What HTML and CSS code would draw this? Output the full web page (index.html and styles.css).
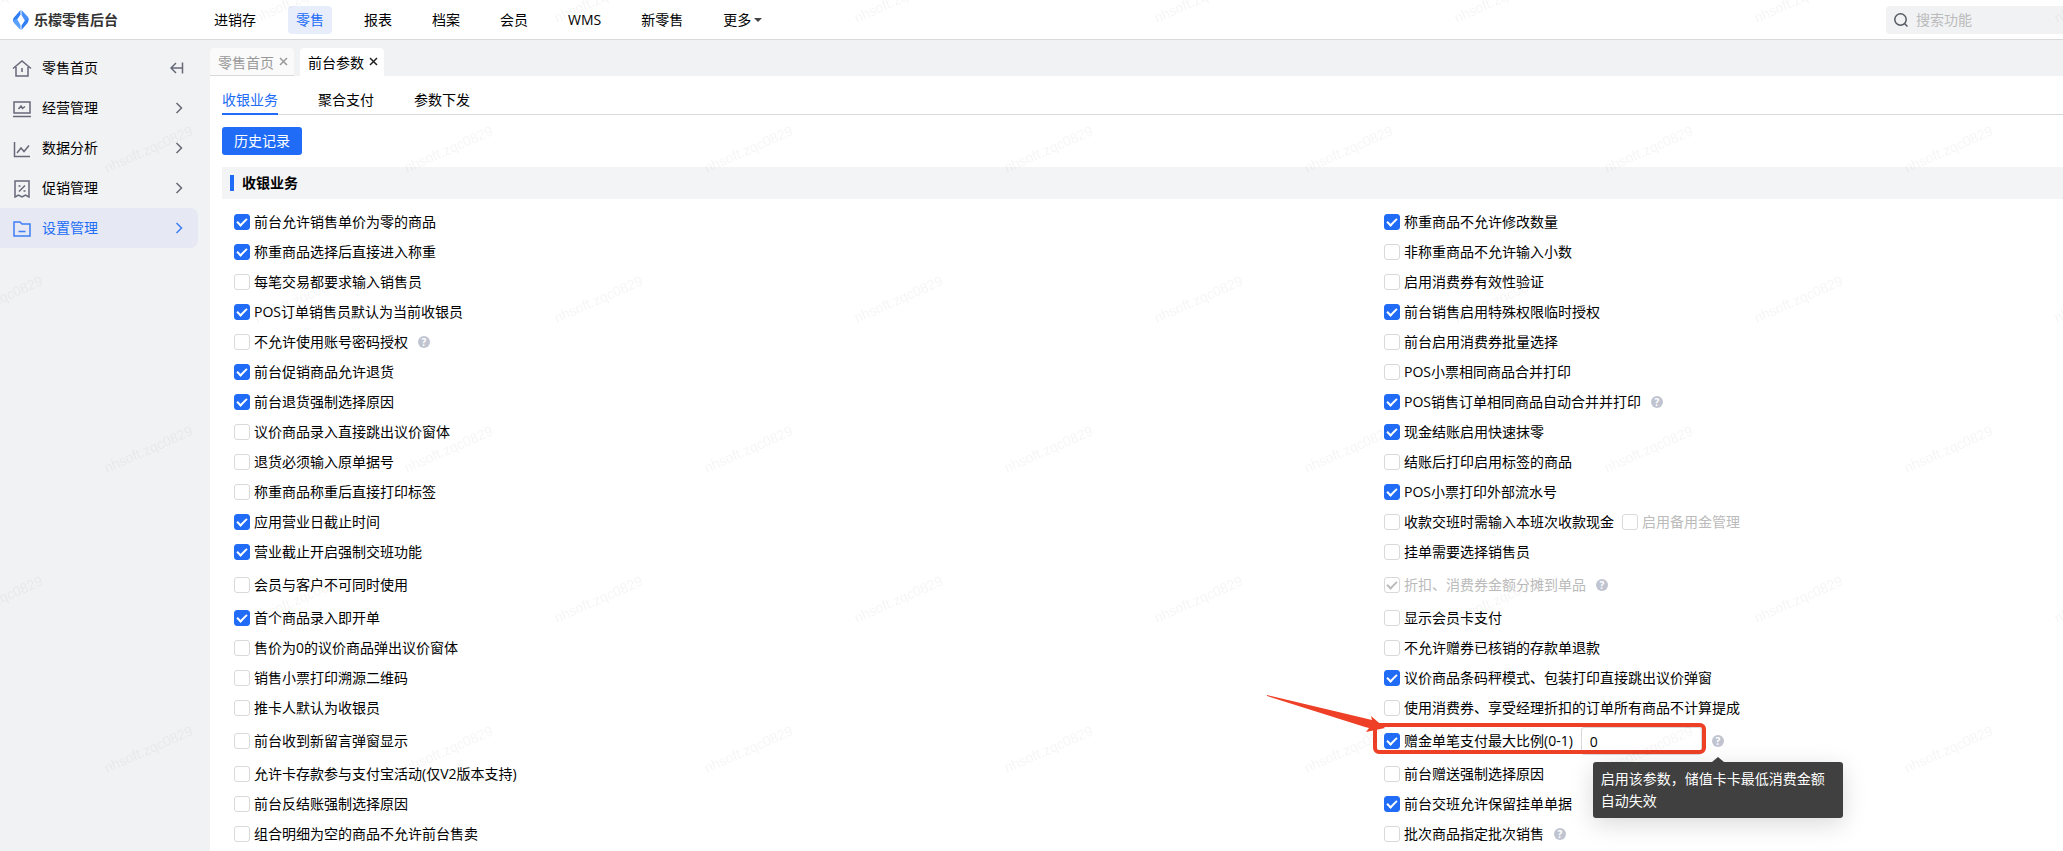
FILE: index.html
```
<!DOCTYPE html>
<html lang="zh-CN">
<head>
  <meta charset="UTF-8" />
  <title>乐檬零售后台</title>
  <link rel="stylesheet" href="styles.css">
</head>
<body>
  <header class="header">
    <div class="brand">
      <svg width="16" height="20" viewBox="0 0 16 20">
        <path d="M7.5 0 L7.5 4.500 L4.500 9 L1 12.500 Q0 11 0 10 Q0 9 0.600 8 Z" fill="#2f7df6"/>
        <path d="M8.500 0 L15 7 Q16 8.600 15.500 10 L12 11 L8.500 5 Z" fill="#4a90fa"/>
        <path d="M0.600 10 L4 9 L7.500 15 L7.500 20 L1 13 Q0 11.500 0.600 10 Z" fill="#58a0ff"/>
        <path d="M15.400 8.500 Q16 11.500 14.500 13 L8.500 20 L8.500 15.500 L11.500 11 Z" fill="#2f7df6"/>
      </svg>
      <span>乐檬零售后台</span>
    </div>
    <nav class="nav">
      <a href="#">进销存</a>
      <a href="#" class="active">零售</a>
      <a href="#">报表</a>
      <a href="#">档案</a>
      <a href="#">会员</a>
      <a href="#">WMS</a>
      <a href="#">新零售</a>
      <a href="#">更多<i class="caret"></i></a>
    </nav>
    <label class="search">
      <svg width="14" height="14" viewBox="0 0 14 14" fill="none" stroke="#555a64" stroke-width="1.500">
        <circle cx="6.500" cy="6.500" r="5.700"/><path d="M10.500 10.500 L13.500 13.500"/>
      </svg>
      <input type="text" placeholder="搜索功能" aria-label="搜索功能" />
    </label>
  </header>

  <div class="layout">
    <aside class="sidebar">
      <a href="#" class="menu">
        <svg class="icon" viewBox="0 0 20 20"><path d="M1 10.500 L10 3 L19 10.500 M4 9 V18 H16 V9 M10 10 V14"/></svg>
        <span>零售首页</span>
        <svg class="fold" viewBox="0 0 14 12"><path d="M6 1 L1 6 L6 11 M1 6 H12 M12.500 0.500 V11.500"/></svg>
      </a>
      <a href="#" class="menu">
        <svg class="icon" viewBox="0 0 20 20"><path d="M2 4 H18 V15 H2 Z M1 18.500 H19 M6.500 11 L9 8 L10.500 10.500 L13 8.500"/></svg>
        <span>经营管理</span>
        <svg class="arrow" viewBox="0 0 8 12"><path d="M1.500 1 L6.500 6 L1.500 11"/></svg>
      </a>
      <a href="#" class="menu">
        <svg class="icon" viewBox="0 0 20 20"><path d="M2.500 4 V18.500 H18 M5 15 L9 10 L12 13.500 L17 7.500"/></svg>
        <span>数据分析</span>
        <svg class="arrow" viewBox="0 0 8 12"><path d="M1.500 1 L6.500 6 L1.500 11"/></svg>
      </a>
      <a href="#" class="menu">
        <svg class="icon" viewBox="0 0 20 20"><path d="M3 3 H17 V19 L13.500 17 L10 19 L6.500 17 L3 19 Z M7 13.500 L13 7.500 M6.500 8 H8.500 M11.500 13 H13.500"/></svg>
        <span>促销管理</span>
        <svg class="arrow" viewBox="0 0 8 12"><path d="M1.500 1 L6.500 6 L1.500 11"/></svg>
      </a>
      <a href="#" class="menu active">
        <svg class="icon" viewBox="0 0 20 20"><path d="M2 18 V4 H8 L10 6 H18 V18 Z M6.500 13.500 H13.500"/></svg>
        <span>设置管理</span>
        <svg class="arrow" viewBox="0 0 8 12"><path d="M1.500 1 L6.500 6 L1.500 11"/></svg>
      </a>
    </aside>

    <main class="main">
      <div class="page-tabs">
        <div class="page-tab"><a href="#">零售首页</a><button type="button" aria-label="关闭"><svg viewBox="0 0 10 10"><path d="M1 1 L8 8 M8 1 L1 8"/></svg></button></div>
        <div class="page-tab active"><a href="#">前台参数</a><button type="button" aria-label="关闭"><svg viewBox="0 0 10 10"><path d="M1 1 L8 8 M8 1 L1 8"/></svg></button></div>
      </div>

      <div class="panel">
        <nav class="sub-tabs">
          <a href="#" class="active">收银业务</a>
          <a href="#">聚合支付</a>
          <a href="#">参数下发</a>
        </nav>
        <button type="button" class="btn">历史记录</button>
        <h2 class="title">收银业务</h2>

        <div class="params">
          <div class="row"><label><input type="checkbox" checked />前台允许销售单价为零的商品</label></div>
          <div class="row"><label><input type="checkbox" checked />称重商品不允许修改数量</label></div>

          <div class="row"><label><input type="checkbox" checked />称重商品选择后直接进入称重</label></div>
          <div class="row"><label><input type="checkbox" />非称重商品不允许输入小数</label></div>

          <div class="row"><label><input type="checkbox" />每笔交易都要求输入销售员</label></div>
          <div class="row"><label><input type="checkbox" />启用消费券有效性验证</label></div>

          <div class="row"><label><input type="checkbox" checked />POS订单销售员默认为当前收银员</label></div>
          <div class="row"><label><input type="checkbox" checked />前台销售启用特殊权限临时授权</label></div>

          <div class="row"><label><input type="checkbox" />不允许使用账号密码授权</label><span class="help">?</span></div>
          <div class="row"><label><input type="checkbox" />前台启用消费券批量选择</label></div>

          <div class="row"><label><input type="checkbox" checked />前台促销商品允许退货</label></div>
          <div class="row"><label><input type="checkbox" />POS小票相同商品合并打印</label></div>

          <div class="row"><label><input type="checkbox" checked />前台退货强制选择原因</label></div>
          <div class="row"><label><input type="checkbox" checked />POS销售订单相同商品自动合并并打印</label><span class="help">?</span></div>

          <div class="row"><label><input type="checkbox" />议价商品录入直接跳出议价窗体</label></div>
          <div class="row"><label><input type="checkbox" checked />现金结账启用快速抹零</label></div>

          <div class="row"><label><input type="checkbox" />退货必须输入原单据号</label></div>
          <div class="row"><label><input type="checkbox" />结账后打印启用标签的商品</label></div>

          <div class="row"><label><input type="checkbox" />称重商品称重后直接打印标签</label></div>
          <div class="row"><label><input type="checkbox" checked />POS小票打印外部流水号</label></div>

          <div class="row"><label><input type="checkbox" checked />应用营业日截止时间</label></div>
          <div class="row">
            <label><input type="checkbox" />收款交班时需输入本班次收款现金</label>
            <label class="disabled"><input type="checkbox" disabled />启用备用金管理</label>
          </div>

          <div class="row"><label><input type="checkbox" checked />营业截止开启强制交班功能</label></div>
          <div class="row"><label><input type="checkbox" />挂单需要选择销售员</label></div>

          <div class="row tall"><label><input type="checkbox" />会员与客户不可同时使用</label></div>
          <div class="row tall"><label class="disabled"><input type="checkbox" checked disabled />折扣、消费券金额分摊到单品</label><span class="help">?</span></div>

          <div class="row"><label><input type="checkbox" checked />首个商品录入即开单</label></div>
          <div class="row"><label><input type="checkbox" />显示会员卡支付</label></div>

          <div class="row"><label><input type="checkbox" />售价为0的议价商品弹出议价窗体</label></div>
          <div class="row"><label><input type="checkbox" />不允许赠券已核销的存款单退款</label></div>

          <div class="row"><label><input type="checkbox" />销售小票打印溯源二维码</label></div>
          <div class="row"><label><input type="checkbox" checked />议价商品条码秤模式、包装打印直接跳出议价弹窗</label></div>

          <div class="row"><label><input type="checkbox" />推卡人默认为收银员</label></div>
          <div class="row"><label><input type="checkbox" />使用消费券、享受经理折扣的订单所有商品不计算提成</label></div>

          <div class="row tall"><label><input type="checkbox" />前台收到新留言弹窗显示</label></div>
          <div class="row tall">
            <div class="marked">
              <label><input type="checkbox" checked />赠金单笔支付最大比例(0-1)</label>
              <input type="text" class="ratio" value="0" aria-label="赠金单笔支付最大比例" />
              <svg class="pointer" width="118" height="38" viewBox="0 0 118 38">
                <path d="M0 0 L105 25 L104 21 L118 33 L99 37 L102 33 L98 32 L0 1 Z" fill="#ee4026"/>
              </svg>
            </div>
            <span class="help">?
              <span class="tooltip">启用该参数，储值卡卡最低消费金额自动失效</span>
            </span>
          </div>

          <div class="row"><label><input type="checkbox" />允许卡存款参与支付宝活动(仅V2版本支持)</label></div>
          <div class="row"><label><input type="checkbox" />前台赠送强制选择原因</label></div>

          <div class="row"><label><input type="checkbox" />前台反结账强制选择原因</label></div>
          <div class="row"><label><input type="checkbox" checked />前台交班允许保留挂单单据</label></div>

          <div class="row"><label><input type="checkbox" />组合明细为空的商品不允许前台售卖</label></div>
          <div class="row"><label><input type="checkbox" />批次商品指定批次销售</label><span class="help">?</span></div>
        </div>
      </div>
    </main>
  </div>

  <svg class="watermark" aria-hidden="true">
    <defs>
      <pattern id="wm" width="300" height="300" patternUnits="userSpaceOnUse">
        <text transform="translate(107 173) rotate(-24)">nhsoft.zqc0829</text>
        <text transform="translate(257 23) rotate(-24)">nhsoft.zqc0829</text>
        <text transform="translate(257 323) rotate(-24)">nhsoft.zqc0829</text>
        <text transform="translate(-43 23) rotate(-24)">nhsoft.zqc0829</text>
        <text transform="translate(-43 323) rotate(-24)">nhsoft.zqc0829</text>
      </pattern>
    </defs>
    <rect width="100%" height="100%" fill="url(#wm)"/>
  </svg>
</body>
</html>
```

FILE: styles.css
```
*, *::before, *::after {
  box-sizing: border-box;
}
body {
  margin: 0;
  height: 100vh;
  display: flex;
  flex-direction: column;
  overflow: hidden;
  font-family: "Open Sans", "Noto Sans CJK SC", sans-serif;
  font-size: 14px;
  line-height: 20px;
  color: #000;
  background: #f1f2f4;
}
a {
  color: inherit;
  text-decoration: none;
}
input, button {
  font: inherit;
}

/* Header */
.header {
  display: flex;
  align-items: center;
  flex: none;
  height: 40px;
  background: #fff;
  border-bottom: 1px solid #d9d9d9;
}
.brand {
  display: flex;
  align-items: center;
  gap: 5px;
  width: 206px;
  padding-left: 13px;
  font-weight: 700;
  color: #333;
}
.nav {
  display: flex;
  gap: 24px;
}
.nav a {
  padding: 4px 8px;
  border-radius: 4px;
}
.nav a.active {
  color: #206cf6;
  background: #e8edfb;
}
.caret {
  display: inline-block;
  margin-left: 3px;
  vertical-align: 3px;
  border: 4px solid transparent;
  border-top-color: #444;
  border-bottom: 0;
}
.search {
  display: flex;
  align-items: center;
  gap: 8px;
  width: 177px;
  height: 28px;
  margin-left: auto;
  padding-left: 8px;
  border-radius: 4px 0 0 4px;
  background: #f1f2f4;
}
.search input {
  width: 140px;
  padding: 0;
  border: 0;
  background: none;
  outline: none;
}
.search input::placeholder {
  color: #bbb;
}

.layout {
  display: flex;
  flex: 1;
  min-height: 0;
}

/* Sidebar */
.sidebar {
  flex: none;
  width: 210px;
  padding: 8px 12px 0 0;
}
.menu {
  display: flex;
  align-items: center;
  height: 40px;
  padding: 0 14px 0 12px;
  border-radius: 0 8px 8px 0;
}
.menu span {
  flex: 1;
  margin-left: 10px;
}
.menu svg {
  fill: none;
  stroke: #666a78;
  stroke-width: 1.5;
}
.icon {
  width: 20px;
  height: 20px;
}
.arrow {
  width: 8px;
  height: 12px;
  margin-right: 1px;
}
.fold {
  width: 14px;
  height: 12px;
}
.menu.active {
  color: #206cf6;
  background: #e6e9f3;
}
.menu.active svg {
  stroke: #3e7df5;
}

/* Opened pages */
.main {
  flex: 1;
  min-width: 0;
  padding-top: 8px;
}
.page-tabs {
  display: flex;
  gap: 6px;
}
.page-tab {
  display: flex;
  align-items: center;
  width: 84px;
  height: 28px;
  padding-left: 8px;
  gap: 5px;
  color: #999;
  background: #fafafa;
  border-bottom: 1px solid #d9d9d9;
  border-radius: 4px 4px 0 0;
}
.page-tab a {
  padding-top: 2px;
}
.page-tab button {
  display: flex;
  padding: 0;
  border: 0;
  background: none;
}
.page-tab svg {
  width: 10px;
  height: 10px;
  stroke: #999;
  stroke-width: 1.5;
}
.page-tab.active {
  color: #000;
  background: #fff;
  border-bottom-color: #fff;
}
.page-tab.active svg {
  stroke: #222;
}

.panel {
  padding-left: 12px;
  background: #fff;
  height: 100%;
}
.sub-tabs {
  display: flex;
  gap: 40px;
  height: 39px;
  border-bottom: 1px solid #d9d9d9;
}
.sub-tabs a {
  height: 39px;
  line-height: 48px;
}
.sub-tabs a.active {
  color: #206cf6;
  border-bottom: 2px solid #206cf6;
}
.btn {
  display: block;
  width: 80px;
  height: 28px;
  margin: 12px 0;
  padding: 0;
  border: 0;
  border-radius: 3px;
  color: #fff;
  background: #206cf6;
}
.title {
  display: flex;
  align-items: center;
  gap: 8px;
  height: 32px;
  margin: 0 0 8px;
  padding-left: 8px;
  font-size: 14px;
  background: #f3f4f6;
}
.title::before {
  content: "";
  width: 4px;
  height: 16px;
  background: #206cf6;
}

/* Parameter list, two columns */
.params {
  display: grid;
  grid-template-columns: 1150fr 679fr;
  padding-left: 12px;
}
.row {
  display: flex;
  align-items: center;
  gap: 8px;
  height: 30px;
  white-space: nowrap;
}
.row.tall {
  height: 36px;
}
.row label {
  display: flex;
  align-items: center;
  gap: 4px;
}
.row label.disabled {
  color: #bbb;
}
input[type="checkbox"] {
  appearance: none;
  position: relative;
  width: 16px;
  height: 16px;
  margin: 0;
  border: 1px solid #d9d9d9;
  border-radius: 3px;
  background: #fff;
}
input[type="checkbox"]:checked::after {
  content: "";
  position: absolute;
  left: 4px;
  top: 1px;
  width: 6px;
  height: 10px;
  border: solid #fff;
  border-width: 0 2px 2px 0;
  transform: rotate(45deg);
}
input[type="checkbox"]:checked {
  border-color: #206cf6;
  background: #206cf6;
}
input[type="checkbox"]:disabled {
  border-color: #d9d9d9;
  background: #fff;
}
input[type="checkbox"]:disabled::after {
  border-color: #bbb;
}
.help {
  position: relative;
  width: 12px;
  height: 12px;
  margin-left: 2px;
  border-radius: 50%;
  font-size: 10px;
  font-weight: 700;
  line-height: 12px;
  text-align: center;
  color: #fff;
  background: #c0c4d0;
}

/* Highlighted parameter */
.marked {
  position: relative;
  display: flex;
  align-items: center;
  gap: 8px;
}
.marked::after {
  content: "";
  position: absolute;
  inset: -4px -4px 1px -11px;
  border: 4px solid #ee4026;
  border-radius: 6px;
  pointer-events: none;
}
.ratio {
  width: 121px;
  height: 28px;
  padding: 0 8px;
  border: 1px solid #d9d9d9;
  border-radius: 3px;
  outline: none;
}
.pointer {
  position: absolute;
  left: -117px;
  top: -32px;
}
.tooltip {
  position: absolute;
  z-index: 2;
  left: -119px;
  top: 27px;
  width: 250px;
  padding: 6px 8px;
  border-radius: 3px;
  font-size: 14px;
  font-weight: 400;
  line-height: 22px;
  text-align: left;
  white-space: normal;
  background: #404040;
  box-shadow: 0 6px 24px rgba(0, 0, 0, 0.15);
}
.tooltip::before {
  content: "";
  position: absolute;
  left: 119px;
  top: -5px;
  border: 6px solid transparent;
  border-top: 0;
  border-bottom: 5px solid #404040;
}

.watermark {
  position: fixed;
  z-index: 10;
  inset: 0;
  width: 100%;
  height: 100%;
  pointer-events: none;
  font-family: "Liberation Sans", Arial, sans-serif;
  font-size: 14px;
  opacity: 0.04;
}
```
